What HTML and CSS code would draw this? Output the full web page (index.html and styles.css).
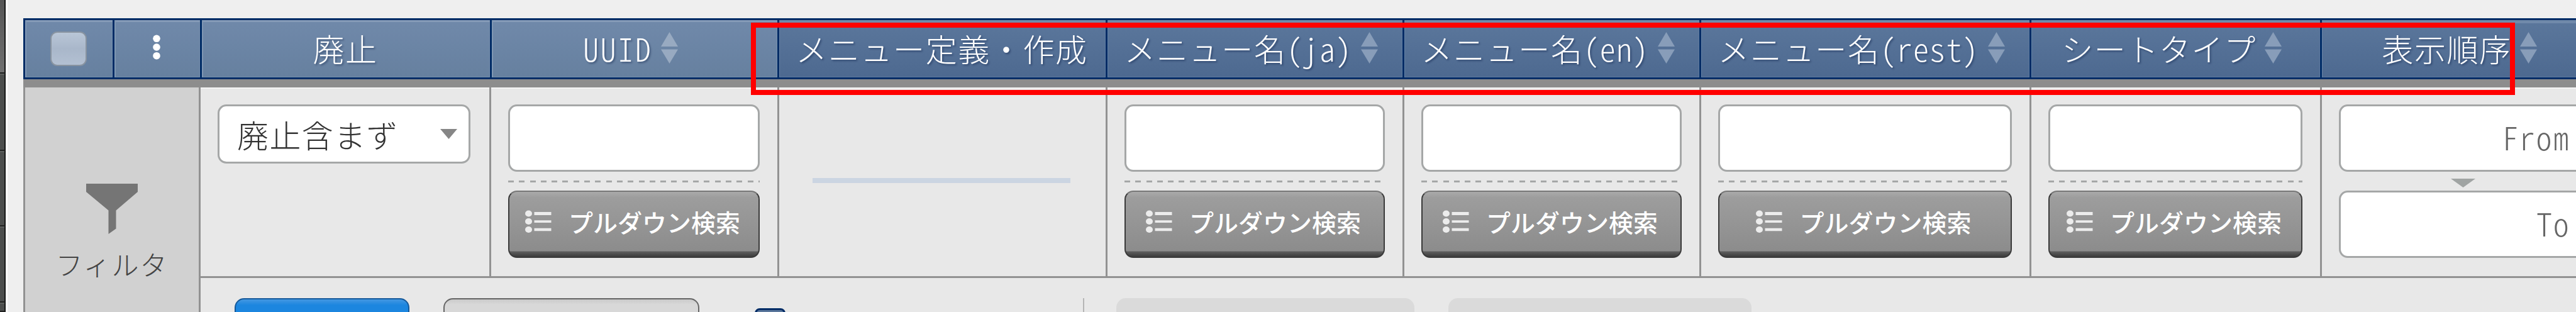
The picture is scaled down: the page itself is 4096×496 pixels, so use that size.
FILE: index.html
```html
<!DOCTYPE html>
<html lang="ja">
<head>
<meta charset="utf-8">
<title>メニュー定義一覧</title>
<link rel="stylesheet" href="styles.css">
</head>
<body>
<svg class="defs" width="0" height="0">
  <symbol id="sort" viewBox="0 0 27 50"><path d="M13.500 0L27 23H0zM0 27.500H27L13.500 50z"/></symbol>
  <symbol id="list" viewBox="0 0 42 36">
    <ellipse cx="5.500" cy="5.500" rx="5.500" ry="5"/><ellipse cx="5.500" cy="18" rx="5.500" ry="5"/><ellipse cx="5.500" cy="31" rx="5.500" ry="5"/>
    <path d="M14.500 3h27v5h-27zM14.500 16.200h27v3.800h-27zM14.500 28.800h27v4.400h-27z"/>
  </symbol>
</svg>
<div class="app">
  <aside class="strip"><i></i><i></i><i></i><i></i><i></i></aside>
  <main class="main">
    <div class="table">
      <div class="head">
        <div class="th"><span class="check"></span></div>
        <div class="th"><svg class="dots" viewBox="0 0 14 40"><circle cx="7" cy="6.300" r="5.800"/><circle cx="7" cy="20" r="5.800"/><circle cx="7" cy="33.700" r="5.800"/></svg></div>
        <div class="th"><span>廃止</span></div>
        <div class="th"><span class="latin uuid">UUID</span><svg class="sort"><use href="#sort"/></svg></div>
        <div class="th deep"><span>メニュー定義・作成</span></div>
        <div class="th deep"><span>メニュー名</span><span class="latin l4">(ja)</span><svg class="sort"><use href="#sort"/></svg></div>
        <div class="th deep"><span>メニュー名</span><span class="latin l4">(en)</span><svg class="sort"><use href="#sort"/></svg></div>
        <div class="th deep"><span>メニュー名</span><span class="latin l6">(rest)</span><svg class="sort"><use href="#sort"/></svg></div>
        <div class="th deep"><span>シートタイプ</span><svg class="sort"><use href="#sort"/></svg></div>
        <div class="th deep"><span>表示順序</span><svg class="sort"><use href="#sort"/></svg></div>
      </div>
      <div class="body">
        <div class="filter">
          <svg class="funnel" viewBox="0 0 82 80"><path d="M0 0H82V13L47.500 42.500V71.500L35.500 80V42.500L0 13z"/></svg>
          <span>フィルタ</span>
        </div>
        <div class="td"><div class="select"><span>廃止含まず</span><svg class="caret" viewBox="0 0 27 16"><path d="M0 0H27L13.500 16z"/></svg></div></div>
        <div class="td"><div class="input"></div><div class="dash"></div><div class="pull"><svg class="list"><use href="#list"/></svg><span>プルダウン検索</span></div></div>
        <div class="td empty"><div class="bar"></div></div>
        <div class="td"><div class="input"></div><div class="dash"></div><div class="pull"><svg class="list"><use href="#list"/></svg><span>プルダウン検索</span></div></div>
        <div class="td"><div class="input"></div><div class="dash"></div><div class="pull"><svg class="list"><use href="#list"/></svg><span>プルダウン検索</span></div></div>
        <div class="td"><div class="input"></div><div class="dash"></div><div class="pull"><svg class="list"><use href="#list"/></svg><span>プルダウン検索</span></div></div>
        <div class="td"><div class="input"></div><div class="dash"></div><div class="pull"><svg class="list"><use href="#list"/></svg><span>プルダウン検索</span></div></div>
        <div class="td"><div class="input"><span class="latin from">From</span></div><svg class="down" viewBox="0 0 39 14"><path d="M0 0H39L19.500 14z"/></svg><div class="input"><span class="latin to">To</span></div></div>
        <div class="foot">
          <div class="btn blue"></div><div class="btn gray"></div><div class="auto"></div><div class="sep"></div><div class="off"></div><div class="off wide"></div>
        </div>
      </div>
    </div>
  </main>
  <div class="marker"></div>
</div>
</body>
</html>
```

FILE: styles.css
```css
* { box-sizing: border-box; }
body { margin: 0; background: #efefef; font-family: "Noto Sans CJK JP", sans-serif; font-weight: 300; }
.defs { display: block; position: absolute; }
svg { display: block; flex: none; }
.app { position: relative; width: 4096px; height: 496px; display: flex; overflow: hidden; }
.strip { width: 12px; flex: none; display: grid; grid-template-rows: 117px 123px 120px 121px 15px; border-right: 3px solid #fff; background: #4b4d4c; }
.strip i { border-right: 2px solid #161716; border-bottom: 2px solid #202120; box-shadow: inset 0 2px #5d605e; }
.strip i:first-child { background: linear-gradient(#555, #707070); box-shadow: none; }
.main { flex: none; width: 4084px; padding: 29px 0 0 25px; }
.table { width: 4105px; }

.head { display: grid; grid-template-columns: 142px 139px 461px 457px 522px 472px 472px 525px 462px 453px; height: 97px; border-top: 3px solid #002c66; border-bottom: 3px solid #002c66; }
.th { display: flex; align-items: center; justify-content: center; padding-right: 2px; border-left: 3px solid #002c66; background: linear-gradient(#7089aa, #66809f); box-shadow: inset 2px 0 #8097b3, inset 0 3px #869bb8, inset -1px -1px #7890ae; color: #fff; font-size: 50px; line-height: 72px; letter-spacing: 1.6px; white-space: nowrap; text-shadow: 2px 2px 3px rgba(0, 20, 60, .4); }
.th > span:not(.check) { margin-bottom: 3px; }
.th.deep { background: linear-gradient(#5b779c, #4d6990); box-shadow: inset 1px 0 #6783a6, inset 0 5px #7089aa, inset -1px -1px #607ba0; }
.check { width: 58px; height: 55px; border: 2px solid #8893a0; border-radius: 11px; background: linear-gradient(#b9c6d7, #a9b7ca 50%, #b3c0d2); }
.dots { width: 14px; height: 40px; fill: #fff; margin-top: -5px; }
.sort { width: 27px; height: 50px; margin: -3px 11px 0 13px; fill: #889db9; }
.th:nth-child(4) .sort { fill: #98aac1; }

/* half-width forms: each latin character takes half of the kana pitch */
.latin { display: block; font-feature-settings: "hwid" 1; font-size: 50px; line-height: 72px; letter-spacing: 1.2px; white-space: nowrap; }
.uuid { width: 111px; letter-spacing: 2.600px; }
.l4 { width: 105px; }
.l6 { width: 158px; }

.body { display: grid; grid-template-columns: 279px 462px 458px 522px 472px 472px 525px 462px 453px; grid-template-rows: 303px 54px; border-top: 13px solid #8d8d8d; background: #e8e8e8; }
.filter { grid-row: span 2; display: flex; flex-direction: column; align-items: center; padding: 153px 0 0 0; border-left: 3px solid #929292; background: #d1d1d1; color: #444; font-size: 43px; line-height: 60px; white-space: nowrap; }
.funnel { width: 82px; height: 80px; fill: #757575; margin-bottom: 17px; }
.filter span { letter-spacing: 2px; }
.td { height: 303px; display: flex; flex-direction: column; padding: 27px 28px 0 27px; border-left: 3px solid #929292; border-bottom: 3px solid #929292; box-shadow: inset 0 2px #f4f4f4; }
.select, .input { border: 3px solid #a5a7a7; background: #fff; border-radius: 14px; flex: none; display: flex; align-items: center; }
.select { height: 94px; justify-content: space-between; padding: 0 18px 0 28px; margin-right: 2px; color: #333; font-size: 50px; letter-spacing: 1.4px; line-height: 80px; white-space: nowrap; }
.caret { width: 27px; height: 16px; fill: #868686; }
.input { height: 107px; }
.dash { flex: none; height: 3px; margin: 14px 0 13px; background: repeating-linear-gradient(90deg, #a5a7a7 0 9px, transparent 9px 17.300px); }
.pull { flex: none; height: 107px; display: flex; align-items: center; justify-content: center; padding: 0 4px 10px 0; border: 2px solid #3a3a3a; border-top-color: #777; border-radius: 14px; background: linear-gradient(#aaa 0, #9d9d9d 9px, #8c8c8c 94px, #5e5e5e 95px, #3c3c3c 103px); color: #fff; font-size: 39px; line-height: 50px; font-weight: 500; white-space: nowrap; }
.list { width: 42px; height: 36px; margin-right: 27px; fill: #ececec; }
.empty { justify-content: center; padding: 0 56px 4px 53px; }
.bar { height: 8px; background: #cbd5e2; }
.from, .to { color: #666; letter-spacing: 1.800px; margin-bottom: 6px; }
.from { margin-left: 257px; width: 108px; }
.to { margin-left: 311px; width: 54px; }
.down { width: 39px; height: 14px; margin: 11px auto 5px; fill: #a0a4a3; }

.foot { grid-column: 2 / -1; display: flex; align-items: flex-start; height: 54px; padding: 32px 0 0 54px; border-left: 3px solid #929292; }
.btn { height: 60px; border-radius: 15px; border: 2px solid #666; }
.blue { width: 278px; border-color: #15599a; background: linear-gradient(#4498e2, #1c86df 9px); }
.gray { width: 407px; margin-left: 54px; background: linear-gradient(#cacaca, #d8d8d8 8px); }
.auto { width: 49px; height: 49px; margin: 16px 0 0 88px; border: 3px solid #002c66; border-radius: 8px; background: #5a769b; }
.sep { width: 2px; height: 50px; margin-left: 473px; background: #b5b5b5; }
.off { width: 474px; height: 60px; margin-left: 51px; border-radius: 15px; background: #dadada; }
.off.wide { width: 482px; margin-left: 54px; }

.marker { position: absolute; left: 1194px; top: 36px; width: 2805px; height: 115px; border: 8px solid #f00; }
```
